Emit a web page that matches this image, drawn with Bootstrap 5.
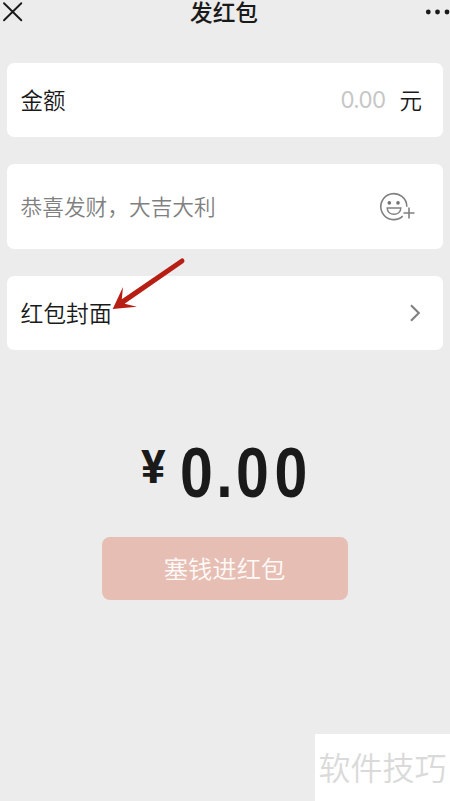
<!DOCTYPE html>
<html lang="zh-CN">
<head>
<meta charset="utf-8">
<meta name="viewport" content="width=device-width, initial-scale=1">
<title>发红包</title>
<link href="https://cdn.jsdelivr.net/npm/bootstrap@5.3.0/dist/css/bootstrap.min.css" rel="stylesheet">
<style>
  body { background: #ececec; color: #1a1a1a; font-family: "Noto Sans CJK SC", sans-serif; }
  .screen { width: 450px; height: 801px; }
  .topbar { height: 24px; margin-bottom: 39px; }
  .topbar-title { font-size: 22.7px; line-height: 24px; font-weight: 500; margin-left: -2px; }
  .close-icon { left: 0; top: 0; }
  .more-icon { right: 0; top: 0; }
  .panel { margin: 0 7px; padding: 0 21px 0 13.5px; border-radius: 7px; line-height: 32px; font-weight: 350; }
  .panel > span { padding-bottom: 2px; }
  .panel-amount { height: 74px; margin-bottom: 27px; font-size: 22.5px; }
  .panel-wish { height: 85px; margin-bottom: 27px; padding-right: 27px; font-size: 21.7px; color: #808080; }
  .panel-cover { height: 74px; font-size: 22.8px; }
  .panel-cover > span { padding-bottom: 1px; }
  .panel > .placeholder-num { color: #c6c6c6; margin-right: 14px; padding-bottom: 0; font-family: Inter, sans-serif; font-size: 22.3px; letter-spacing: -.6px; font-weight: 400; }
  .arrow { left: 108px; top: 254px; }
  .total { margin-top: 84px; height: 80px; padding-left: 141px; }
  .total-sign { font-family: Roboto, sans-serif; font-size: 46px; line-height: 67px; font-weight: 700; margin-right: 14.5px; }
  .total-num { font-family: "Liberation Sans", Arial, sans-serif; font-weight: 700; font-size: 69.5px; line-height: 79px; letter-spacing: 6.6px; transform: scaleX(.85); transform-origin: left; }
  .total-int { letter-spacing: 4px; }
  .pay-btn, .pay-btn:disabled { width: 246px; height: 63px; margin-top: 23px; padding: 0 1px 1px 0; border: 0; border-radius: 8px; background: #e6beb4; color: #fffaf8; opacity: 1; font-size: 24.3px; font-weight: 350; line-height: 60px; }
  .stamp { right: 0; bottom: 0; width: 135px; height: 67px; padding-left: 3.5px; font-size: 32px; line-height: 65px; font-weight: 350; color: #dadada; }
</style>
</head>
<body>
<main class="screen position-relative overflow-hidden">
  <header class="topbar position-relative text-center">
    <svg class="close-icon position-absolute" width="26" height="24" viewBox="0 0 26 24" fill="none" stroke="#1a1a1a" stroke-width="1.9" stroke-linecap="round"><path d="M4 3.2 21.3 20.3M21.3 3.2 4 20.3"/></svg>
    <h1 class="topbar-title mb-0">发红包</h1>
    <svg class="more-icon position-absolute" width="30" height="24" viewBox="0 0 30 24" fill="#1a1a1a"><circle cx="8.3" cy="12" r="2.4"/><circle cx="17.5" cy="12" r="2.4"/><circle cx="27" cy="12" r="2.4"/></svg>
  </header>

  <section class="panel panel-amount bg-white d-flex align-items-center">
    <span class="me-auto">金额</span>
    <span class="placeholder-num">0.00</span>
    <span>元</span>
  </section>

  <section class="panel panel-wish bg-white d-flex align-items-center justify-content-between">
    <span>恭喜发财，大吉大利</span>
    <svg width="38" height="30" viewBox="378 191.5 38 30" fill="none" stroke="#808080" stroke-width="1.6">
      <path d="M402.7 215.6A13 13 0 1 1 406.8 206.3"/>
      <path d="M387.2 207.5H400.8C400.8 215.8 387.2 215.8 387.2 207.5Z" stroke-width="1.5"/>
      <circle cx="389.3" cy="202.4" r="1.8" fill="#737373" stroke="none"/>
      <circle cx="398" cy="202.4" r="1.8" fill="#737373" stroke="none"/>
      <path d="M403.5 212.5H414.5M409 207V218"/>
    </svg>
  </section>

  <section class="panel panel-cover bg-white d-flex align-items-center justify-content-between">
    <span>红包封面</span>
    <svg width="14" height="20" viewBox="0 0 14 20" fill="none" stroke="#808080" stroke-width="2.1"><path d="M3 2.2 10.8 10 3 17.8"/></svg>
  </section>

  <svg class="arrow position-absolute" width="80" height="60" viewBox="108 254 80 60" fill="#b71f14"><path d="M112.7 309 123 287 121.8 299.2 180.7 258.9A2.4 2.4 0 0 1 183.4 262.9L124.6 303.8 137 306.8Z"/></svg>

  <div class="total d-flex align-items-start">
    <span class="total-sign">¥</span>
    <span class="total-num"><span class="total-int">0.</span>00</span>
  </div>

  <button class="pay-btn btn d-block mx-auto" type="button" disabled>塞钱进红包</button>

  <div class="stamp position-absolute bg-white text-nowrap">软件技巧</div>
</main>
<script src="https://cdn.jsdelivr.net/npm/bootstrap@5.3.0/dist/js/bootstrap.bundle.min.js"></script>
</body>
</html>
